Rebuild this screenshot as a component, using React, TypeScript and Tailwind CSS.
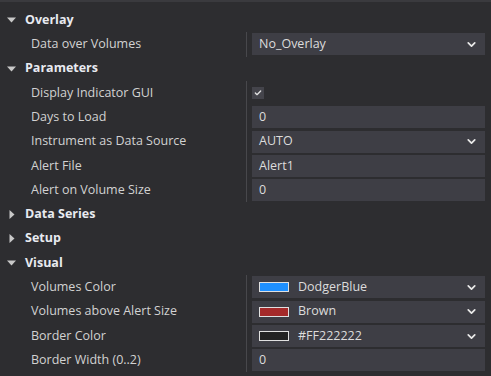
import { ChevronDown, Check } from 'lucide-react';

type Prop =
  | { label: string; kind: 'select'; value: string; swatch?: string }
  | { label: string; kind: 'text'; value: string }
  | { label: string; kind: 'check' };

type Group = { title: string; open: boolean; props: Prop[] };

const groups: Group[] = [
  {
    title: 'Overlay',
    open: true,
    props: [{ label: 'Data over Volumes', kind: 'select', value: 'No_Overlay' }],
  },
  {
    title: 'Parameters',
    open: true,
    props: [
      { label: 'Display Indicator GUI', kind: 'check' },
      { label: 'Days to Load', kind: 'text', value: '0' },
      { label: 'Instrument as Data Source', kind: 'select', value: 'AUTO' },
      { label: 'Alert File', kind: 'text', value: 'Alert1' },
      { label: 'Alert on Volume Size', kind: 'text', value: '0' },
    ],
  },
  { title: 'Data Series', open: false, props: [] },
  { title: 'Setup', open: false, props: [] },
  {
    title: 'Visual',
    open: true,
    props: [
      { label: 'Volumes Color', kind: 'select', value: 'DodgerBlue', swatch: '#1e90ff' },
      { label: 'Volumes above Alert Size', kind: 'select', value: 'Brown', swatch: '#a52a2a' },
      { label: 'Border Color', kind: 'select', value: '#FF222222', swatch: '#222222' },
      { label: 'Border Width (0..2)', kind: 'text', value: '0' },
    ],
  },
];

function Caret({ open }: { open: boolean }) {
  return open ? (
    <svg width="9" height="6" viewBox="0 0 9 6" className="ml-[7px] mr-[9px]">
      <path d="M0 0.5h9L4.5 5.5z" fill="#c8c8c8" />
    </svg>
  ) : (
    <svg width="6" height="9" viewBox="0 0 6 9" className="ml-[9px] mr-[10px]">
      <path d="M0.5 0v9L5.5 4.5z" fill="#c8c8c8" />
    </svg>
  );
}

function Value({ p }: { p: Prop }) {
  if (p.kind === 'check') {
    return (
      <div className="ml-[5px] flex h-[12px] w-[12px] items-center justify-center bg-[#44444b]">
        <Check size={8} strokeWidth={4} color="#e0e0e0" />
      </div>
    );
  }
  return (
    <div className="ml-[5px] mr-[6px] flex h-[22px] flex-1 items-center bg-[#3e3e45] pl-[7px] pr-[7px] text-[#dcdcdc]">
      {p.kind === 'select' && p.swatch && (
        <span
          className="mr-[9px] h-[10px] w-[30px] border border-[#e0e0e0]"
          style={{ backgroundColor: p.swatch }}
        />
      )}
      <span className="flex-1">{p.value}</span>
      {p.kind === 'select' && <ChevronDown size={13} strokeWidth={3.2} color="#e8e8e8" />}
    </div>
  );
}

export default function App() {
  return (
    <div
      className="h-[376px] w-[491px] overflow-hidden border-t-2 border-[#3a3a3e] bg-[#2d2d30] pt-[6px] text-[12.5px] text-[#d2d2d2]"
      style={{ fontFamily: '"Open Sans", "Noto Sans", sans-serif' }}
    >
      {groups.map((g) => (
        <div key={g.title}>
          <div className="flex h-[24.3px] items-center">
            <Caret open={g.open} />
            <span className="font-bold text-[#e8eaf0]">{g.title}</span>
          </div>
          {g.open &&
            g.props.map((p) => (
              <div key={p.label} className="flex h-[24.3px] items-center">
                <div className="w-[246px] shrink-0 pl-[31px]">{p.label}</div>
                <div className="flex h-full flex-1 items-center border-l border-[#48484c]">
                  <Value p={p} />
                </div>
              </div>
            ))}
        </div>
      ))}
    </div>
  );
}
